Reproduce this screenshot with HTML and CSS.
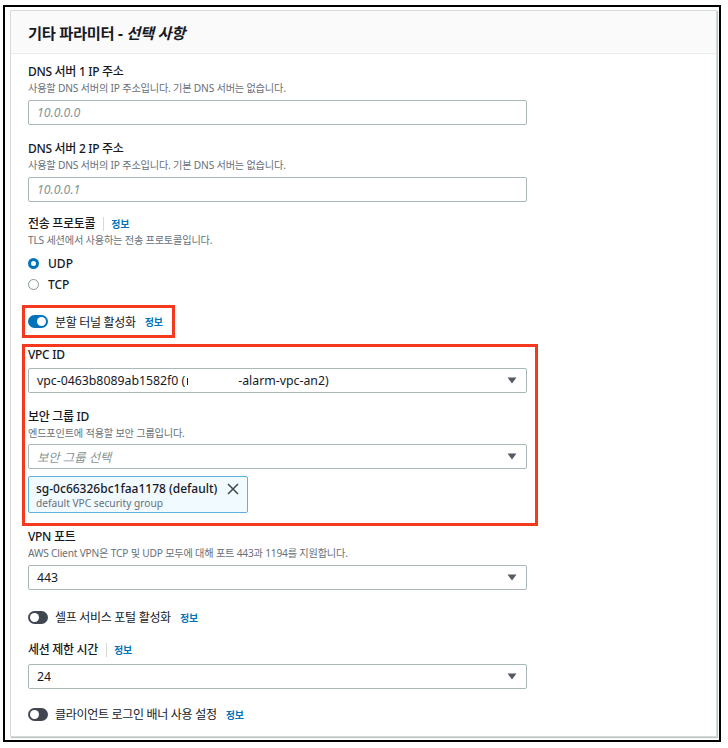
FILE: index.html
```html
<!DOCTYPE html>
<html lang="ko">
<head>
<meta charset="utf-8">
<title>기타 파라미터</title>
<link rel="stylesheet" href="styles.css">
</head>
<body>
<div class="frame">
  <section class="card">
    <header class="card-head">
      <h2 class="card-title">기타 파라미터 - <i>선택 사항</i></h2>
    </header>
    <div class="card-body">
      <div class="field">
        <div class="label">DNS 서버 1 IP 주소</div>
        <div class="desc">사용할 DNS 서버의 IP 주소입니다. 기본 DNS 서버는 없습니다.</div>
        <div class="input placeholder">10.0.0.0</div>
      </div>

      <div class="field mt-16">
        <div class="label">DNS 서버 2 IP 주소</div>
        <div class="desc">사용할 DNS 서버의 IP 주소입니다. 기본 DNS 서버는 없습니다.</div>
        <div class="input placeholder">10.0.0.1</div>
      </div>

      <div class="field mt-14">
        <div class="label label-row">전송 프로토콜<span class="sep"></span><span class="info">정보</span></div>
        <div class="desc">TLS 세션에서 사용하는 전송 프로토콜입니다.</div>
        <div class="radios">
          <div class="radio-row"><span class="radio on"></span><span class="radio-text">UDP</span></div>
          <div class="radio-row"><span class="radio"></span><span class="radio-text">TCP</span></div>
        </div>
      </div>

      <div class="hl hl-toggle">
        <div class="toggle-row">
          <span class="toggle on"><span class="knob"></span></span>
          <span class="toggle-text">분할 터널 활성화</span>
          <span class="info">정보</span>
        </div>
      </div>

      <div class="hl hl-group">
        <div class="field">
          <div class="label">VPC ID</div>
          <div class="input select">
            <span class="value">vpc-0463b8089ab1582f0 (<span class="cut"></span><span class="redact"></span>-alarm-vpc-an2)</span>
            <svg class="caret" width="10" height="7" viewBox="0 0 10 7"><path d="M0.5 0.5H9.5L5 6.5Z" fill="#545b64"/></svg>
          </div>
        </div>
        <div class="field mt-16">
          <div class="label">보안 그룹 ID</div>
          <div class="desc">엔드포인트에 적용할 보안 그룹입니다.</div>
          <div class="input select sg-select">
            <span class="placeholder-text">보안 그룹 선택</span>
            <svg class="caret" width="10" height="7" viewBox="0 0 10 7"><path d="M0.5 0.5H9.5L5 6.5Z" fill="#545b64"/></svg>
          </div>
          <div class="token">
            <div class="token-text">
              <div class="token-main">sg-0c66326bc1faa1178 (default)</div>
              <div class="token-sub">default VPC security group</div>
            </div>
            <svg class="token-x" width="12" height="12" viewBox="0 0 12 12"><path d="M1 1L11 11M11 1L1 11" stroke="#414750" stroke-width="1.5" fill="none"/></svg>
          </div>
        </div>
      </div>

      <div class="field mt-3">
        <div class="label">VPN 포트</div>
        <div class="desc">AWS Client VPN은 TCP 및 UDP 모두에 대해 포트 443과 1194를 지원합니다.</div>
        <div class="input select">
          <span class="value">443</span>
          <svg class="caret" width="10" height="7" viewBox="0 0 10 7"><path d="M0.5 0.5H9.5L5 6.5Z" fill="#545b64"/></svg>
        </div>
      </div>

      <div class="toggle-row mt-17">
        <span class="toggle"><span class="knob"></span></span>
        <span class="toggle-text">셀프 서비스 포털 활성화</span>
        <span class="info">정보</span>
      </div>

      <div class="field mt-15">
        <div class="label label-row">세션 제한 시간<span class="sep"></span><span class="info">정보</span></div>
        <div class="input select mt-6">
          <span class="value">24</span>
          <svg class="caret" width="10" height="7" viewBox="0 0 10 7"><path d="M0.5 0.5H9.5L5 6.5Z" fill="#545b64"/></svg>
        </div>
      </div>

      <div class="toggle-row mt-15">
        <span class="toggle"><span class="knob"></span></span>
        <span class="toggle-text">클라이언트 로그인 배너 사용 설정</span>
        <span class="info">정보</span>
      </div>
    </div>
  </section>
</div>
</body>
</html>
```

FILE: styles.css
```css
* { box-sizing: border-box; }

body {
  margin: 0;
  background: #fff;
  color: #16191f;
  font-family: "Noto Sans", "Noto Sans CJK KR", sans-serif;
}

.frame {
  margin: 5px 0 0 3px;
  width: 718px;
  height: 737px;
  border: 2px solid #000;
  padding: 3px 1px 0 5px;
}

.card {
  width: 707px;
  height: 727px;
  border: 1px solid #d5dbdb;
  box-shadow: 1px 1px 1px rgba(0, 28, 36, 0.25);
  background: #fff;
}

.card-head {
  height: 43px;
  background: #fafafa;
  border-bottom: 1px solid #eaeded;
  padding: 0 17px;
  display: flex;
  align-items: center;
}

.card-title {
  margin: 0;
  font-size: 15.3px;
  font-weight: 700;
  letter-spacing: -0.3px;
}

.card-title i { font-style: italic; }

.card-body {
  padding: 10px 17px 0;
  display: flex;
  flex-direction: column;
  align-items: flex-start;
}

.field { display: flex; flex-direction: column; }

.label {
  font-size: 12px;
  line-height: 16px;
  font-weight: 500;
  letter-spacing: -0.3px;
}

.label-row { display: flex; align-items: center; }

.desc {
  margin-top: 1px;
  font-size: 10.2px;
  line-height: 14px;
  color: #687078;
  letter-spacing: -0.2px;
}

.input {
  margin-top: 5px;
  width: 499px;
  height: 25px;
  border: 1px solid #aab7b8;
  border-radius: 2px;
  padding: 0 9px 0 8px;
  display: flex;
  align-items: center;
  font-size: 12.3px;
  color: #16191f;
}

.input.placeholder,
.placeholder-text {
  font-style: italic;
  color: #879596;
}

.select { justify-content: space-between; }

.sg-select { margin-top: 4px; }

.caret { flex: none; }

.value { white-space: nowrap; }

.cut {
  display: inline-block;
  width: 3px;
  height: 7px;
  border-left: 1px solid #16191f;
  margin-left: 2px;
}

.redact {
  display: inline-block;
  width: 48px;
}

.sep {
  width: 1px;
  height: 14px;
  background: #d5dbdb;
  margin: 0 7px 0 8px;
}

.info {
  font-size: 10px;
  font-weight: 700;
  color: #0073bb;
  letter-spacing: -0.2px;
}

.radios {
  margin-top: 6px;
  display: flex;
  flex-direction: column;
}

.radio-row {
  height: 21px;
  display: flex;
  align-items: center;
}

.radio {
  width: 11px;
  height: 11px;
  border-radius: 50%;
  border: 1px solid #879596;
  margin-right: 9px;
  background: #fff;
}

.radio.on { border: 3.5px solid #0073bb; }

.radio-text {
  font-size: 12px;
  font-weight: 500;
}

.hl {
  border: 3px solid #f5391f;
  margin-left: -6px;
  padding-left: 3px;
}

.hl-toggle {
  margin-top: 10px;
  padding: 3.5px 9px 3.5px 3px;
}

.hl-group {
  margin-top: 6px;
  width: 516px;
  padding: 0 8px 10px 3px;
}

.toggle-row {
  height: 20px;
  display: flex;
  align-items: center;
}

.toggle {
  width: 20px;
  height: 13px;
  border-radius: 7px;
  background: #414750;
  padding: 2px;
  display: flex;
  justify-content: flex-start;
  margin-right: 7px;
}

.toggle.on {
  background: #0073bb;
  justify-content: flex-end;
}

.knob {
  width: 9px;
  height: 9px;
  border-radius: 50%;
  background: #fff;
}

.toggle-text {
  font-size: 12px;
  letter-spacing: -0.3px;
  margin-right: 9px;
}

.token {
  align-self: flex-start;
  margin-top: 7px;
  height: 37px;
  border: 1px solid #5fb2dc;
  background: #f1faff;
  border-radius: 2px;
  padding: 3px 8px 0 7px;
  display: flex;
  align-items: flex-start;
}

.token-main {
  font-size: 12px;
  line-height: 17px;
  font-weight: 500;
}

.token-sub {
  font-size: 10.2px;
  line-height: 13px;
  color: #687078;
}

.token-x {
  margin: 3px 0 0 10px;
  flex: none;
}

.mt-3 { margin-top: 3px; }
.mt-6 { margin-top: 6px; }
.mt-14 { margin-top: 14px; }
.mt-15 { margin-top: 15px; }
.mt-16 { margin-top: 16px; }
.mt-17 { margin-top: 17px; }
```
